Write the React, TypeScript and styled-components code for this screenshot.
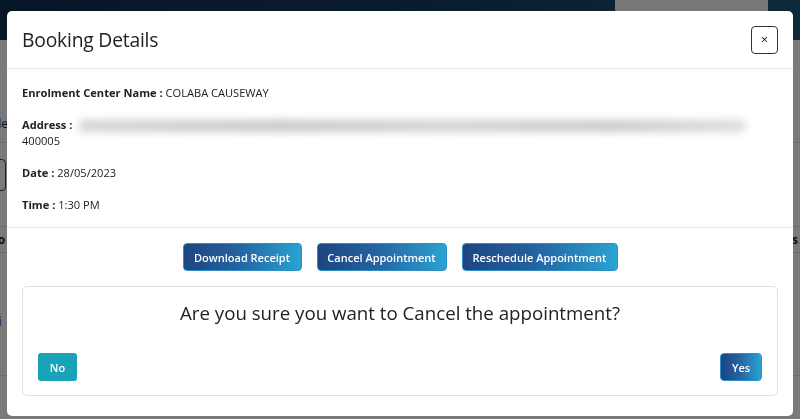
import styled, { createGlobalStyle } from 'styled-components';

const GlobalStyle = createGlobalStyle`
  html, body {
    margin: 0;
    padding: 0;
    width: 800px;
    height: 419px;
    overflow: hidden;
    font-family: 'Open Sans', 'Noto Sans', sans-serif;
    background: #ffffff;
  }
  * { box-sizing: border-box; }
`;

const Page = styled.div`
  width: 800px;
  height: 419px;
  display: flex;
  flex-direction: column;
  background: #f4f4f4;
`;

const TopBar = styled.div`
  height: 40px;
  display: flex;
  justify-content: flex-end;
  align-items: flex-start;
  background: linear-gradient(90deg, #0d2c4f 0%, #12385c 50%, #1d5474 100%);
`;

const TopTab = styled.div`
  width: 153px;
  height: 15px;
  margin-right: 32px;
  background: #f0f0f0;
  border-radius: 0 0 6px 6px;
`;

const PageRow = styled.div<{ $h: number; $align: string; $pad: number }>`
  height: ${(p) => p.$h}px;
  display: flex;
  align-items: ${(p) => p.$align};
  justify-content: space-between;
  padding: ${(p) => (p.$align === 'flex-end' ? `0 2px ${p.$pad}px` : `${p.$pad}px 2px 0`)};
  border-bottom: 1px solid #d6d6d6;
  font-size: 12px;
  line-height: 16px;
  color: #222;
`;

const PageLabel = styled.span<{ $bold?: boolean }>`
  font-weight: ${(p) => (p.$bold ? 700 : 400)};
  margin-left: -8px;
`;

const SideBox = styled.div`
  width: 14px;
  height: 32px;
  margin-left: -10px;
  border: 1px solid #2f3f80;
  border-radius: 4px;
`;

const Overlay = styled.div`
  position: fixed;
  inset: 0;
  background: rgba(0, 0, 0, 0.5);
  display: flex;
  justify-content: center;
  padding-top: 11px;
`;

const Modal = styled.div`
  width: 786px;
  height: 405px;
  background: #fff;
  border-radius: 5px;
  display: flex;
  flex-direction: column;
  overflow: hidden;
`;

const Header = styled.div`
  height: 58px;
  display: flex;
  align-items: center;
  justify-content: space-between;
  padding: 0 15px 0 15px;
  border-bottom: 1px solid #e6e6e6;
`;

const Title = styled.h4`
  margin: 0;
  font-size: 19.3px;
  font-weight: 400;
  color: #222;
  letter-spacing: -0.2px;
`;

const CloseButton = styled.button`
  width: 27px;
  height: 28px;
  padding: 0;
  border: 1px solid #333;
  border-radius: 4px;
  background: #fff;
  color: #222;
  font-family: 'Open Sans', sans-serif;
  font-size: 13px;
  line-height: 1;
  display: flex;
  align-items: center;
  justify-content: center;
`;

const Body = styled.div`
  padding: 16px 15px 14px 15px;
  display: flex;
  flex-direction: column;
  gap: 16px;
  border-bottom: 1px solid #e6e6e6;
`;

const InfoLine = styled.div`
  font-size: 11.1px;
  line-height: 16px;
  color: #222;
`;

const Label = styled.b`
  font-weight: 700;
`;

const Blurred = styled.span`
  display: inline-block;
  vertical-align: middle;
  width: 668px;
  height: 12px;
  margin-left: 6px;
  border-radius: 6px;
  background: linear-gradient(90deg, #d4d4d4, #c8c8c8 30%, #d2d2d2 55%, #cacaca 80%, #dcdcdc);
  filter: blur(4px);
`;

const Actions = styled.div`
  display: flex;
  justify-content: center;
  gap: 15px;
  padding-top: 15px;
`;

const GradientButton = styled.button<{ $w: number }>`
  width: ${(p) => p.$w}px;
  height: 28px;
  padding: 0;
  border: 1px solid #2b8fc4;
  border-radius: 4px;
  background: linear-gradient(90deg, #1d4583 0%, #2561a0 45%, #2aa3d2 100%);
  color: #fff;
  font-family: 'Open Sans', sans-serif;
  font-size: 11px;
  font-weight: 600;
`;

const ConfirmCard = styled.div`
  margin: 15px 15px 0 15px;
  height: 110px;
  border: 1px solid #e2e2e2;
  border-radius: 5px;
  padding: 13px 15px 0 15px;
  display: flex;
  flex-direction: column;
`;

const Question = styled.div`
  text-align: center;
  font-size: 18.7px;
  line-height: 26px;
  color: #222;
`;

const ConfirmRow = styled.div`
  margin-top: 27px;
  display: flex;
  justify-content: space-between;
`;

const NoButton = styled.button`
  width: 39px;
  height: 28px;
  padding: 0;
  border: none;
  border-radius: 3px;
  background: #19a3b6;
  color: #fff;
  font-family: 'Open Sans', sans-serif;
  font-size: 11px;
  font-weight: 600;
`;

export default function App() {
  return (
    <>
      <GlobalStyle />
      <Page>
        <TopBar>
          <TopTab />
        </TopBar>
        <PageRow $h={103} $align="flex-end" $pad={10}>
          <PageLabel>de</PageLabel>
        </PageRow>
        <PageRow $h={84} $align="flex-start" $pad={16}>
          <SideBox />
        </PageRow>
        <PageRow $h={26} $align="flex-start" $pad={5}>
          <PageLabel $bold>io</PageLabel>
          <PageLabel $bold>s</PageLabel>
        </PageRow>
        <PageRow $h={123} $align="flex-start" $pad={61}>
          <PageLabel $bold>li</PageLabel>
        </PageRow>
      </Page>
      <Overlay>
        <Modal>
          <Header>
            <Title>Booking Details</Title>
            <CloseButton>×</CloseButton>
          </Header>
          <Body>
            <InfoLine>
              <Label>Enrolment Center Name :</Label> COLABA CAUSEWAY
            </InfoLine>
            <InfoLine>
              <Label>Address :</Label>
              <Blurred />
              <br />
              400005
            </InfoLine>
            <InfoLine>
              <Label>Date :</Label> 28/05/2023
            </InfoLine>
            <InfoLine>
              <Label>Time :</Label> 1:30 PM
            </InfoLine>
          </Body>
          <Actions>
            <GradientButton $w={119}>Download Receipt</GradientButton>
            <GradientButton $w={130}>Cancel Appointment</GradientButton>
            <GradientButton $w={156}>Reschedule Appointment</GradientButton>
          </Actions>
          <ConfirmCard>
            <Question>Are you sure you want to Cancel the appointment?</Question>
            <ConfirmRow>
              <NoButton>No</NoButton>
              <GradientButton $w={42}>Yes</GradientButton>
            </ConfirmRow>
          </ConfirmCard>
        </Modal>
      </Overlay>
    </>
  );
}
